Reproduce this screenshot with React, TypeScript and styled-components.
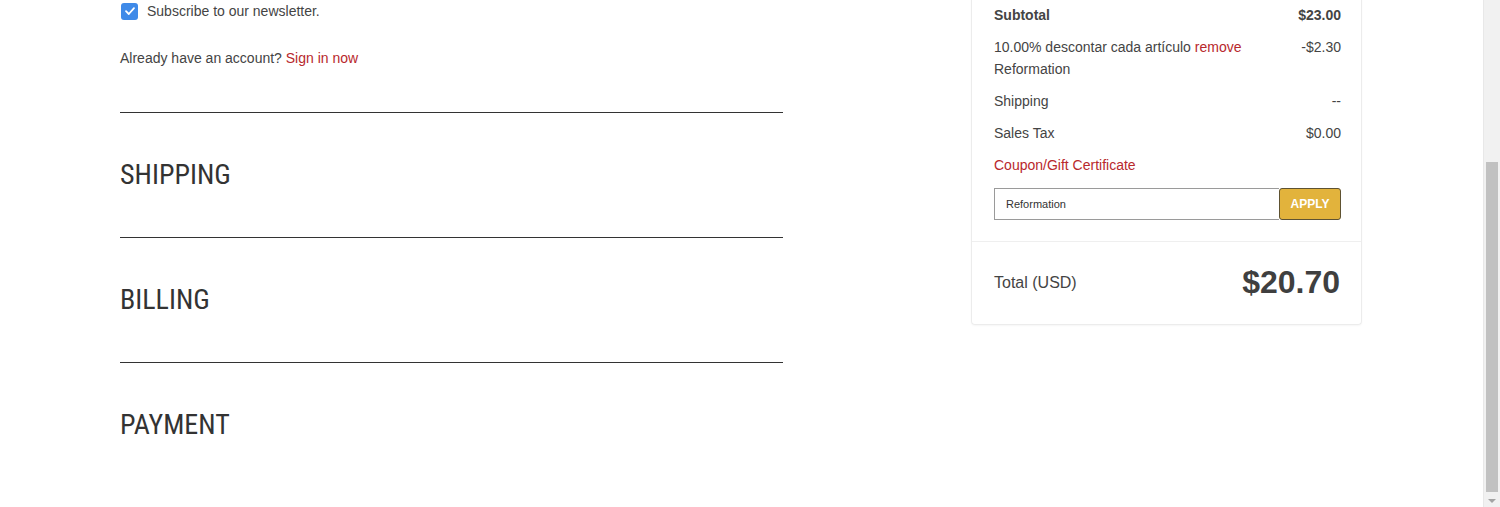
import React from "react";
import styled, { createGlobalStyle } from "styled-components";

const Global = createGlobalStyle`
  html, body { margin: 0; padding: 0; background: #fff; overflow: hidden; }
  body { font-family: "Liberation Sans", Arial, sans-serif; color: #444; }
  * { box-sizing: border-box; }
`;

const Page = styled.div`
  display: flex;
  align-items: flex-start;
  gap: 188px;
  padding-left: 120px;
  width: 1483px;
  height: 507px;
`;

const LeftCol = styled.div`
  width: 663px;
  display: flex;
  flex-direction: column;
`;

const CheckRow = styled.label`
  display: flex;
  align-items: center;
  gap: 9px;
  height: 22px;
  font-size: 14px;
  color: #444;
  padding-left: 1px;
`;

const CheckBox = styled.span`
  width: 17px;
  height: 17px;
  border-radius: 3px;
  background: #3f8ae8;
  display: inline-flex;
  align-items: center;
  justify-content: center;
`;

const AccountLine = styled.p`
  margin: 25px 0 0;
  font-size: 14px;
  line-height: 22px;
  color: #444;
`;

const RedLink = styled.a`
  color: #b8282c;
  text-decoration: none;
  cursor: pointer;
`;

const Section = styled.section`
  border-top: 1px solid #333;
  height: 125px;
  display: flex;
  align-items: center;
  padding-bottom: 1px;
`;

const FirstSection = styled(Section)`
  margin-top: 43px;
`;

const SectionTitle = styled.h2`
  margin: 0;
  font-family: "Roboto Condensed", "DejaVu Sans Condensed", "Roboto", sans-serif;
  font-stretch: condensed;
  font-weight: 400;
  font-size: 28px;
  line-height: 32px;
  color: #333;
  letter-spacing: 0;
`;

const RightCol = styled.aside`
  width: 391px;
  margin-top: -10px;
  border: 1px solid #ececec;
  border-top: none;
  border-radius: 0 0 4px 4px;
  box-shadow: 0 1px 2px rgba(0, 0, 0, 0.04);
`;

const Lines = styled.div`
  padding: 14px 20px 21px 22px;
  display: flex;
  flex-direction: column;
  gap: 10px;
`;

const Row = styled.div`
  display: flex;
  justify-content: space-between;
  align-items: flex-start;
  font-size: 14px;
  line-height: 22px;
  color: #444;
`;

const Label = styled.span<{ $bold?: boolean }>`
  width: 75%;
  font-weight: ${(p) => (p.$bold ? 700 : 400)};
`;

const Amount = styled.span<{ $bold?: boolean }>`
  font-weight: ${(p) => (p.$bold ? 700 : 400)};
  text-align: right;
`;

const CouponTitle = styled.div`
  font-size: 14px;
  line-height: 22px;
  color: #b8282c;
`;

const CouponForm = styled.div`
  display: flex;
  margin-top: 12px;
  height: 32px;
`;

const CouponInput = styled.input`
  flex: 1;
  min-width: 0;
  height: 32px;
  border: 1px solid #9a9a9a;
  border-right: none;
  padding: 0 11px;
  font-family: "Liberation Sans", Arial, sans-serif;
  font-size: 11px;
  color: #333;
  outline: none;
`;

const ApplyButton = styled.button`
  width: 62px;
  height: 32px;
  background: #e2b33c;
  border: 1px solid #5e5232;
  border-radius: 3px;
  color: #fff;
  font-family: "Liberation Sans", Arial, sans-serif;
  font-weight: 700;
  font-size: 12px;
  padding: 0;
  cursor: pointer;
`;

const TotalBar = styled.div`
  border-top: 1px solid #efefef;
  display: flex;
  justify-content: space-between;
  align-items: center;
  padding: 21px 21px 22px 22px;
  height: 83px;
`;

const TotalLabel = styled.span`
  font-size: 16px;
  color: #444;
`;

const TotalAmount = styled.span`
  font-size: 32px;
  font-weight: 700;
  color: #3f3f3f;
`;

const ScrollTrack = styled.div`
  position: fixed;
  top: 0;
  right: 0;
  width: 17px;
  height: 507px;
  background: #f1f1f1;
  border-left: 1px solid #e8e8e8;
`;

const ScrollThumb = styled.div`
  position: absolute;
  left: 2px;
  right: 2px;
  top: 162px;
  height: 330px;
  background: #c1c1c1;
`;

const ScrollArrow = styled.div`
  position: absolute;
  left: 4px;
  bottom: 4px;
  width: 0;
  height: 0;
  border-left: 4px solid transparent;
  border-right: 4px solid transparent;
  border-top: 4px solid #a3a3a3;
`;

export default function App() {
  return (
    <>
      <Global />
      <Page>
        <LeftCol>
          <CheckRow>
            <CheckBox>
              <svg width="12" height="12" viewBox="0 0 12 12">
                <path d="M2 6.2 L4.8 9 L10 3.2" fill="none" stroke="#fff" strokeWidth="1.8" strokeLinecap="round" strokeLinejoin="round" />
              </svg>
            </CheckBox>
            Subscribe to our newsletter.
          </CheckRow>
          <AccountLine>
            Already have an account? <RedLink>Sign in now</RedLink>
          </AccountLine>
          <FirstSection>
            <SectionTitle>SHIPPING</SectionTitle>
          </FirstSection>
          <Section>
            <SectionTitle>BILLING</SectionTitle>
          </Section>
          <Section>
            <SectionTitle>PAYMENT</SectionTitle>
          </Section>
        </LeftCol>
        <RightCol>
          <Lines>
            <Row>
              <Label $bold>Subtotal</Label>
              <Amount $bold>$23.00</Amount>
            </Row>
            <Row>
              <Label>
                10.00% descontar cada artículo <RedLink>remove</RedLink> Reformation
              </Label>
              <Amount>-$2.30</Amount>
            </Row>
            <Row>
              <Label>Shipping</Label>
              <Amount>--</Amount>
            </Row>
            <Row>
              <Label>Sales Tax</Label>
              <Amount>$0.00</Amount>
            </Row>
            <div>
              <CouponTitle>Coupon/Gift Certificate</CouponTitle>
              <CouponForm>
                <CouponInput defaultValue="Reformation" />
                <ApplyButton>APPLY</ApplyButton>
              </CouponForm>
            </div>
          </Lines>
          <TotalBar>
            <TotalLabel>Total (USD)</TotalLabel>
            <TotalAmount>$20.70</TotalAmount>
          </TotalBar>
        </RightCol>
      </Page>
      <ScrollTrack>
        <ScrollThumb />
        <ScrollArrow />
      </ScrollTrack>
    </>
  );
}
